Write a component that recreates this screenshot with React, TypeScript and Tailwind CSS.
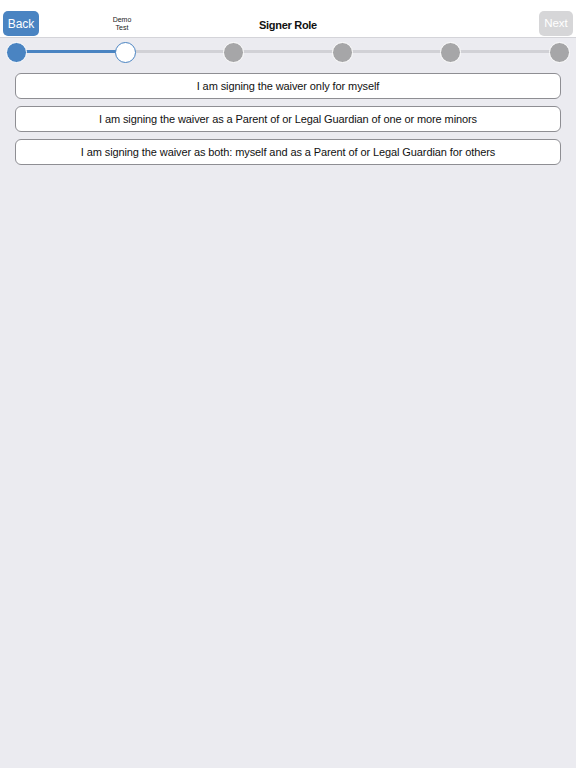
import React from "react";

const options = [
  "I am signing the waiver only for myself",
  "I am signing the waiver as a Parent of or Legal Guardian of one or more minors",
  "I am signing the waiver as both: myself and as a Parent of or Legal Guardian for others",
];

export default function App() {
  const steps = [0, 1, 2, 3, 4, 5];
  return (
    <div
      className="w-[576px] h-[768px] bg-[#ebebf0] flex flex-col"
      style={{ fontFamily: '"Liberation Sans", Arial, sans-serif' }}
    >
      <div className="h-[38px] bg-white border-b border-[#d4d4d9] relative flex items-center">
        <div className="w-full flex items-end justify-between px-[3px] pb-[1px] h-full">
          <button className="h-[25px] w-[36px] rounded-[5px] bg-[#4a84c2] text-white text-[12px] leading-none flex items-center justify-center">
            Back
          </button>
          <button className="h-[25px] w-[34px] rounded-[5px] bg-[#d6d6d8] text-white text-[11.5px] leading-none flex items-center justify-center">
            Next
          </button>
        </div>
        <div className="absolute left-[106px] top-[16px] w-[32px] text-center text-[7px] leading-[8px] text-[#222]">
          Demo
          <br />
          Test
        </div>
        <div className="absolute left-0 right-0 top-[18px] text-center text-[11px] tracking-[-0.3px] font-bold text-[#111] leading-[14px]">
          Signer Role
        </div>
      </div>
      <div className="relative h-[26px] mx-[6px] mt-[1px]">
        <div className="absolute left-[10px] right-[10px] top-[11px] h-[3px] bg-[#d1d1d6]" />
        <div className="absolute left-[10px] w-[109px] top-[11px] h-[3px] bg-[#4a84c2]" />
        <div className="absolute inset-0 flex justify-between items-center">
          {steps.map((s) => (
            <div
              key={s}
              className={
                s === 0
                  ? "w-[21px] h-[21px] rounded-full bg-[#4a84c2] border-[1.5px] border-white"
                  : s === 1
                  ? "w-[21px] h-[21px] rounded-full bg-white border-[1.5px] border-[#4a84c2]"
                  : "w-[21px] h-[21px] rounded-full bg-[#a6a6a8] border-[1.5px] border-white"
              }
            />
          ))}
        </div>
      </div>
      <div className="flex flex-col gap-[7px] px-[15px] mt-[8px]">
        {options.map((o) => (
          <button
            key={o}
            className="h-[26px] w-full bg-white border border-[#8e8e93] rounded-[6px] text-[11px] tracking-[-0.1px] text-[#111] flex items-center justify-center"
          >
            {o}
          </button>
        ))}
      </div>
    </div>
  );
}
